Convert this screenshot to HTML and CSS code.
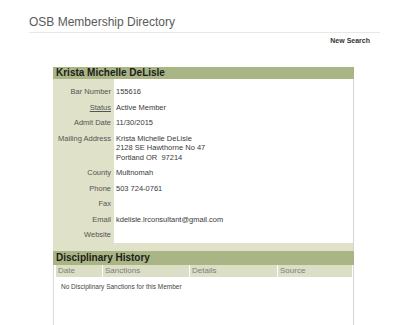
FILE: index.html
```html
<!DOCTYPE html>
<html lang="en">
<head>
  <meta charset="UTF-8" />
  <title>OSB Membership Directory</title>
  <link rel="stylesheet" href="styles.css">
</head>
<body>
  <div class="masthead">
    <h1>OSB Membership Directory</h1>
  </div>
  <div class="toolbar"><a href="#">New Search</a></div>

  <div class="panel">
    <div class="panel-title">Krista Michelle DeLisle</div>
    <table class="member">
      <tr><td class="label">Bar Number</td><td class="value">155616</td></tr>
      <tr><td class="label"><a href="#">Status</a></td><td class="value">Active Member</td></tr>
      <tr><td class="label">Admit Date</td><td class="value">11/30/2015</td></tr>
      <tr>
        <td class="label">Mailing Address</td>
        <td class="value">Krista Michelle DeLisle<br />2128 SE Hawthorne No 47<br />Portland OR&nbsp; 97214</td>
      </tr>
      <tr><td class="label">County</td><td class="value">Multnomah</td></tr>
      <tr><td class="label">Phone</td><td class="value">503 724-0761</td></tr>
      <tr><td class="label">Fax</td><td class="value"></td></tr>
      <tr><td class="label">Email</td><td class="value">kdelisle.lrconsultant@gmail.com</td></tr>
      <tr><td class="label">Website</td><td class="value"></td></tr>
    </table>
    <div class="panel-foot"></div>

    <div class="panel-title history-title">Disciplinary History</div>
    <div class="history">
      <table>
        <tr>
          <th class="col-date">Date</th>
          <th class="col-sanctions">Sanctions</th>
          <th class="col-details">Details</th>
          <th>Source</th>
        </tr>
        <tr><td colspan="4" class="empty">No Disciplinary Sanctions for this Member</td></tr>
      </table>
    </div>
  </div>
</body>
</html>
```

FILE: styles.css
```css
html, body {
  margin: 0;
  padding: 0;
  background: #fff;
  font-family: "Liberation Sans", Arial, sans-serif;
  color: #333;
}
a {
  color: inherit;
}
.masthead {
  margin-left: 29px;
  width: 351px;
  padding: 15px 0 3px;
  border-bottom: 1px solid #e8e8e8;
}
.masthead h1 {
  margin: 0;
  font-size: 12px;
  line-height: 14px;
  font-weight: normal;
  color: #5a5a5a;
}
.toolbar {
  margin-left: 29px;
  width: 341px;
  padding-top: 3px;
  text-align: right;
  font-size: 7px;
  line-height: 9px;
  font-weight: bold;
}
.toolbar a {
  text-decoration: none;
  color: #333;
}
.panel {
  margin: 22px 0 0 53px;
  width: 301px;
  box-sizing: border-box;
  border-right: 1px solid #d4d4d4;
}
.panel-title {
  background: #a9b584;
  height: 12px;
  line-height: 12px;
  padding-left: 3px;
  font-size: 10px;
  font-weight: bold;
  color: #1c1c1c;
  margin-right: -1px;
}
.member {
  width: 100%;
  border-collapse: collapse;
  font-size: 7.5px;
  line-height: 9.5px;
}
.member td {
  padding: 3px 3px;
  vertical-align: top;
}
.member tr:first-child td {
  padding-top: 8px;
}
.member .label {
  width: 55px;
  background: #dfe1c8;
  text-align: right;
  color: #555;
  white-space: nowrap;
}
.member .value {
  background: #fff;
  padding-left: 2px;
  color: #3a3a3a;
}
.panel-foot {
  height: 8px;
  background: #dfe1c8;
}
.history-title {
  height: 14px;
  line-height: 14px;
}
.history {
  border-left: 1px solid #dcdcdc;
  padding: 0 0 34px 1px;
}
.history table {
  width: 100%;
  border-spacing: 1px 0;
  font-size: 8px;
}
.history th {
  background: #dcdfc6;
  color: #7c7c7c;
  font-weight: normal;
  text-align: left;
  height: 12px;
  line-height: 12px;
  padding: 0 0 0 2px;
}
.col-date {
  width: 44px;
}
.col-sanctions {
  width: 84px;
}
.col-details {
  width: 85px;
}
.history .empty {
  padding: 6px 0 0 5px;
  font-size: 6.5px;
  line-height: 8px;
  color: #444;
}
```
